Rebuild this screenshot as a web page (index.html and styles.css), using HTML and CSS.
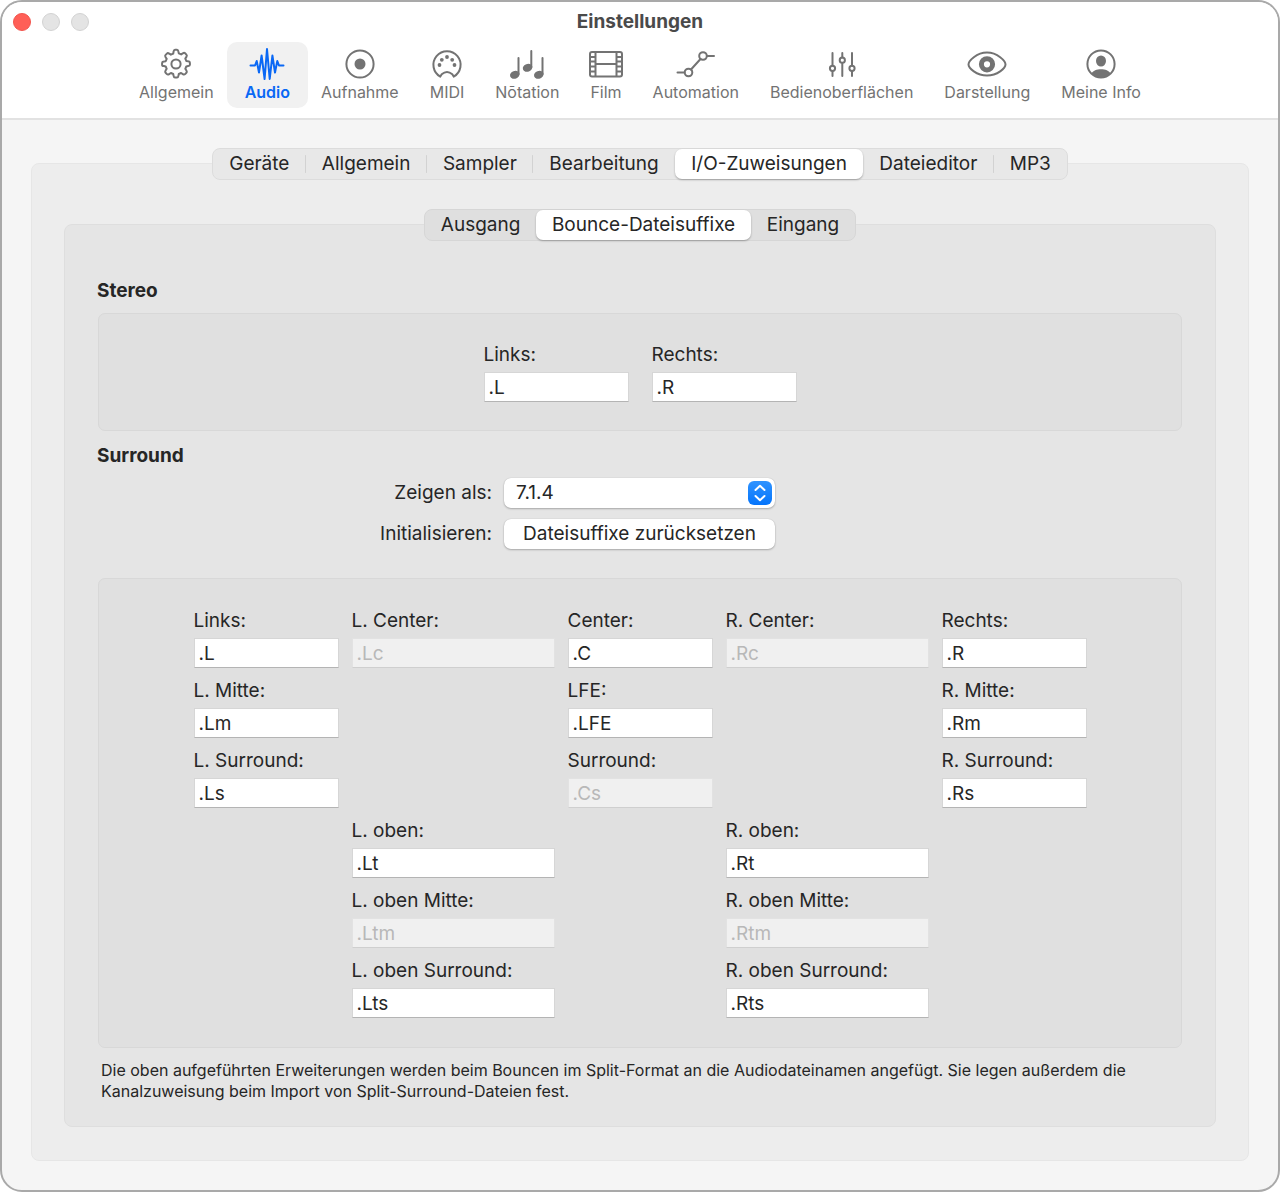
FILE: index.html
```html
<!DOCTYPE html>
<html lang="de">
<head>
<meta charset="utf-8">
<meta name="viewport" content="width=device-width, initial-scale=1">
<title>Einstellungen</title>
<link rel="stylesheet" href="styles.css">
</head>
<body>
<div class="window">
  <header class="titlebar">
    <div class="title-row">
      <div class="lights">
        <button class="light light-close" type="button" aria-label="Schließen"></button>
        <button class="light" type="button" aria-label="Minimieren" disabled></button>
        <button class="light" type="button" aria-label="Vergrößern" disabled></button>
      </div>
      <h1 class="title">Einstellungen</h1>
    </div>
    <nav class="toolbar" aria-label="Bereiche">
      <button class="tool" type="button">
        <svg class="icon" width="40" height="36" viewBox="0 0 40 36" fill="none" stroke="currentColor" stroke-width="2" stroke-linejoin="round"><circle cx="20" cy="18" r="4.6"/><path d="M17.600 5.500Q17.900 3.800 19 3.800h2Q22.100 3.800 22.400 5.500l.4 1.900 2.300 1 1.700-1.100q1.400-.9 2.300 0l1.300 1.300q.9.900 0 2.300l-1.100 1.700 1 2.300 1.900.4q1.700.3 1.700 1.400v2q0 1.100-1.700 1.400l-1.900.4-1 2.300 1.100 1.700q.9 1.400 0 2.300l-1.300 1.300q-.9.900-2.300 0l-1.700-1.100-2.300 1-.4 1.900q-.3 1.700-1.400 1.700h-2q-1.100 0-1.400-1.700l-.4-1.900-2.300-1-1.700 1.100q-1.400.9-2.300 0l-1.300-1.300q-.9-.9 0-2.300l1.100-1.700-1-2.300-1.900-.4Q6.100 20.100 6.100 19v-2q0-1.100 1.700-1.400l1.900-.4 1-2.300-1.100-1.700q-.9-1.400 0-2.300l1.300-1.300q.9-.9 2.300 0l1.700 1.100 2.300-1z"/></svg>
        <span>Allgemein</span>
      </button>
      <button class="tool tool-active" type="button" aria-current="page">
        <svg class="icon" width="40" height="36" viewBox="0 0 40 36" fill="none" stroke="currentColor" stroke-width="2" stroke-linecap="round" stroke-linejoin="round"><path d="M3.500 19.500H8l1.700-4.500 2.300 11.500 2.600-17 3 23.500L20 3l2.700 30L25.400 9.500 28 26.500l2.300-11.500 1.700 4.500h4.500"/></svg>
        <span>Audio</span>
      </button>
      <button class="tool" type="button">
        <svg class="icon" width="40" height="36" viewBox="0 0 40 36" fill="none" stroke="currentColor" stroke-width="2"><circle cx="20" cy="18" r="13.600"/><circle cx="20" cy="18" r="5.500" fill="currentColor" stroke="none"/></svg>
        <span>Aufnahme</span>
      </button>
      <button class="tool" type="button">
        <svg class="icon" width="40" height="36" viewBox="0 0 40 36" fill="none" stroke="currentColor" stroke-width="2" stroke-linejoin="round"><path d="M13.300 30.600A13.600 13.600 0 1 1 26.700 30.600L25.300 28.200Q20 23.700 14.700 28.200Z"/><g fill="currentColor" stroke="none"><circle cx="12.500" cy="19" r="1.900"/><circle cx="14.800" cy="13.800" r="1.900"/><circle cx="20" cy="11" r="1.900"/><circle cx="25.200" cy="13.800" r="1.900"/><circle cx="27.500" cy="19" r="1.900"/></g></svg>
        <span>MIDI</span>
      </button>
      <button class="tool" type="button">
        <svg class="icon" width="40" height="36" viewBox="0 0 40 36" fill="currentColor" stroke="currentColor" stroke-width="2" stroke-linecap="round"><path d="M11.500 12v16M24.300 5v16M35.500 12v16" fill="none"/><ellipse cx="7.800" cy="28.800" rx="3.900" ry="2.900" transform="rotate(-20 7.800 28.800)"/><ellipse cx="20.600" cy="21.800" rx="3.900" ry="2.900" transform="rotate(-20 20.600 21.800)"/><ellipse cx="31.800" cy="28.800" rx="3.900" ry="2.900" transform="rotate(-20 31.800 28.800)"/></svg>
        <span>Nōtation</span>
      </button>
      <button class="tool" type="button">
        <svg class="icon" width="40" height="36" viewBox="0 0 40 36" fill="none" stroke="currentColor" stroke-width="2"><rect x="4" y="6" width="32" height="24.500" rx="2"/><path d="M9.500 6v24.500M30.500 6v24.500M9.500 18h21M4 11h5.500M4 15.500h5.500M4 20.500h5.500M4 25.500h5.500M30.500 11H36M30.500 15.500H36M30.500 20.500H36M30.500 25.500H36"/></svg>
        <span>Film</span>
      </button>
      <button class="tool" type="button">
        <svg class="icon" width="40" height="36" viewBox="0 0 40 36" fill="none" stroke="currentColor" stroke-width="2" stroke-linecap="round"><circle cx="12.500" cy="26.500" r="3.800"/><circle cx="27" cy="10" r="3.800"/><path d="M1.500 26.500h7M31 10h7M15 23.500l9.500-10.500"/></svg>
        <span>Automation</span>
      </button>
      <button class="tool" type="button">
        <svg class="icon" width="40" height="36" viewBox="0 0 40 36" fill="none" stroke="currentColor" stroke-width="2" stroke-linecap="round"><path d="M10.500 7v12.500M10.500 25v5M20.300 7v4.500M20.300 17v13M30 7v12.500M30 25v5"/><circle cx="10.500" cy="22.300" r="2.600"/><circle cx="20.300" cy="14.200" r="2.600"/><circle cx="30" cy="22.300" r="2.600"/></svg>
        <span>Bedienoberflächen</span>
      </button>
      <button class="tool" type="button">
        <svg class="icon" width="40" height="36" viewBox="0 0 40 36" fill="none" stroke="currentColor" stroke-width="2"><path d="M1.500 18.500C1.500 15 9.500 6.500 20 6.500S38.500 15 38.500 18.500 30.500 29.500 20 29.500 1.500 22 1.500 18.500Z"/><circle cx="20" cy="18.300" r="5.600" stroke-width="5"/></svg>
        <span>Darstellung</span>
      </button>
      <button class="tool" type="button">
        <svg class="icon" width="40" height="36" viewBox="0 0 40 36" fill="none" stroke="currentColor" stroke-width="2"><circle cx="20" cy="18" r="13.600"/><ellipse cx="20" cy="15" rx="5" ry="5.500" fill="currentColor" stroke="none"/><path d="M10.500 27.500C13 21.800 27 21.800 29.500 27.500A13.600 13.600 0 0 1 10.500 27.500Z" fill="currentColor" stroke="none"/></svg>
        <span>Meine Info</span>
      </button>
    </nav>
  </header>

  <main class="content">
    <section class="pane pane-outer">
      <div class="tabs tabs-main" role="tablist" aria-label="Audio">
        <button class="tab" type="button" role="tab" aria-selected="false">Geräte</button>
        <button class="tab" type="button" role="tab" aria-selected="false">Allgemein</button>
        <button class="tab" type="button" role="tab" aria-selected="false">Sampler</button>
        <button class="tab" type="button" role="tab" aria-selected="false">Bearbeitung</button>
        <button class="tab" type="button" role="tab" aria-selected="true">I/O-Zuweisungen</button>
        <button class="tab" type="button" role="tab" aria-selected="false">Dateieditor</button>
        <button class="tab" type="button" role="tab" aria-selected="false">MP3</button>
      </div>

      <section class="pane pane-inner">
        <div class="tabs tabs-sub" role="tablist" aria-label="I/O-Zuweisungen">
          <button class="tab" type="button" role="tab" aria-selected="false">Ausgang</button>
          <button class="tab" type="button" role="tab" aria-selected="true">Bounce-Dateisuffixe</button>
          <button class="tab" type="button" role="tab" aria-selected="false">Eingang</button>
        </div>

        <h2 class="heading heading-stereo">Stereo</h2>
        <div class="group group-stereo">
          <div class="field"><label for="st-l">Links:</label><input id="st-l" type="text" value=".L"></div>
          <div class="field"><label for="st-r">Rechts:</label><input id="st-r" type="text" value=".R"></div>
        </div>

        <h2 class="heading">Surround</h2>
        <div class="options">
          <label for="format">Zeigen als:</label>
          <div class="popup">
            <select id="format"><option>7.1.4</option></select>
            <svg class="popup-arrows" width="24" height="24" viewBox="0 0 24 24" fill="none" stroke="currentColor" stroke-width="2" stroke-linecap="round" stroke-linejoin="round"><path d="M7.500 9 12 4.800 16.500 9M7.500 15l4.500 4.200 4.500-4.200"/></svg>
          </div>
          <span id="reset-label">Initialisieren:</span>
          <button id="reset" class="push" type="button" aria-describedby="reset-label">Dateisuffixe zurücksetzen</button>
        </div>

        <div class="group group-surround">
          <div class="field"><label for="su-l">Links:</label><input id="su-l" type="text" value=".L"></div>
          <div class="field"><label for="su-lc">L. Center:</label><input id="su-lc" type="text" value=".Lc" disabled></div>
          <div class="field"><label for="su-c">Center:</label><input id="su-c" type="text" value=".C"></div>
          <div class="field"><label for="su-rc">R. Center:</label><input id="su-rc" type="text" value=".Rc" disabled></div>
          <div class="field"><label for="su-r">Rechts:</label><input id="su-r" type="text" value=".R"></div>

          <div class="field col-1"><label for="su-lm">L. Mitte:</label><input id="su-lm" type="text" value=".Lm"></div>
          <div class="field col-3"><label for="su-lfe">LFE:</label><input id="su-lfe" type="text" value=".LFE"></div>
          <div class="field col-5"><label for="su-rm">R. Mitte:</label><input id="su-rm" type="text" value=".Rm"></div>

          <div class="field col-1"><label for="su-ls">L. Surround:</label><input id="su-ls" type="text" value=".Ls"></div>
          <div class="field col-3"><label for="su-cs">Surround:</label><input id="su-cs" type="text" value=".Cs" disabled></div>
          <div class="field col-5"><label for="su-rs">R. Surround:</label><input id="su-rs" type="text" value=".Rs"></div>

          <div class="field col-2"><label for="su-lt">L. oben:</label><input id="su-lt" type="text" value=".Lt"></div>
          <div class="field col-4"><label for="su-rt">R. oben:</label><input id="su-rt" type="text" value=".Rt"></div>

          <div class="field col-2"><label for="su-ltm">L. oben Mitte:</label><input id="su-ltm" type="text" value=".Ltm" disabled></div>
          <div class="field col-4"><label for="su-rtm">R. oben Mitte:</label><input id="su-rtm" type="text" value=".Rtm" disabled></div>

          <div class="field col-2"><label for="su-lts">L. oben Surround:</label><input id="su-lts" type="text" value=".Lts"></div>
          <div class="field col-4"><label for="su-rts">R. oben Surround:</label><input id="su-rts" type="text" value=".Rts"></div>
        </div>

        <p class="note">Die oben aufgeführten Erweiterungen werden beim Bouncen im Split-Format an die Audiodateinamen angefügt. Sie legen außerdem die Kanalzuweisung beim Import von Split-Surround-Dateien fest.</p>
      </section>
    </section>
  </main>
</div>
</body>
</html>
```
FILE: styles.css
```css
* {
  box-sizing: border-box;
}

body {
  margin: 0;
  padding: 0 2px 2px 0;
  background: #fff;
  color: #262626;
  font-family: Inter, "Liberation Sans", sans-serif;
  font-size: 19px;
  line-height: 22px;
}

button,
input,
select {
  margin: 0;
  color: inherit;
  font: inherit;
}

.window {
  overflow: hidden;
  border: 2px solid #a9a9a9;
  border-radius: 22px;
  background: #f5f5f5;
}

/* Title bar and toolbar */

.titlebar {
  padding-bottom: 10px;
  border-bottom: 2px solid #e2e2e2;
  background: #fff;
}

.title-row {
  display: grid;
  grid-template-columns: 1fr auto 1fr;
  align-items: center;
  height: 40px;
  padding: 0 11px;
}

.lights {
  display: flex;
  gap: 11px;
}

.light {
  width: 18px;
  height: 18px;
  padding: 0;
  border: 1px solid #d2d2d2;
  border-radius: 50%;
  background: #e4e4e4;
}

.light-close {
  border-color: #f2544d;
  background: #ff5f57;
}

.title {
  margin: 0;
  color: #4a4a4a;
  font-size: 19px;
  font-weight: 700;
}

.toolbar {
  display: flex;
  justify-content: center;
  gap: 1px;
}

.tool {
  display: flex;
  flex-direction: column;
  align-items: center;
  height: 66px;
  padding: 4px 15px 0;
  border: 0;
  border-radius: 10px;
  background: none;
  color: #737373;
  font-size: 16px;
  line-height: 20px;
}

.tool .icon {
  margin: 0 -15px;
}

.tool-active {
  margin: 0 -3px;
  padding: 4px 18px 0;
  background: #f1f1f1;
  color: #0a68f5;
  font-weight: 600;
}

/* Nested panes with tab bars straddling their top edge */

.content {
  padding: 43px 29px 29px;
}

.pane {
  display: flex;
  flex-direction: column;
  border-radius: 8px;
}

.pane-outer {
  padding: 0 32px 33px;
  border: 1px solid #e6e6e6;
  background: #ededed;
}

.pane-inner {
  margin-top: 44px;
  padding: 0 33px 24px;
  border: 1px solid #dedede;
  background: #e5e5e5;
}

.tabs {
  display: flex;
  align-self: center;
  height: 32px;
  margin-top: -16px;
  border: 1px solid #dcdcdc;
  border-radius: 8px;
  background: #e8e8e8;
}

.tabs-main {
  min-width: 856px;
}

.tabs-sub {
  min-width: 432px;
  border-color: #d6d6d6;
  background: #dfdfdf;
}

.tab {
  display: flex;
  flex: 1 0 auto;
  align-items: center;
  justify-content: center;
  padding: 0 14px;
  border: 0;
  border-radius: 7px;
  background: none;
}

.tab[aria-selected="true"] {
  background: #fff;
  box-shadow: 0 1px 2px rgba(0, 0, 0, 0.3);
}

.tabs-main .tab[aria-selected="false"]:not(:last-child) {
  background: linear-gradient(#d2d2d2, #d2d2d2) right center / 1px 18px no-repeat;
}

.tabs-main .tab[aria-selected="false"]:nth-child(4) {
  background: none;
}

/* Groups of fields */

.heading {
  margin: 0 0 0 -1px;
  font-size: 19px;
  font-weight: 700;
}

.heading-stereo {
  margin-top: 39px;
}

.group {
  border: 1px solid #d8d8d8;
  border-radius: 7px;
  background: #e0e0e0;
}

.group-stereo {
  display: flex;
  justify-content: center;
  gap: 23px;
  margin: 11px 0 14px;
  padding: 30px 0 28px;
}

.group-stereo .field {
  width: 145px;
}

.group-surround {
  display: grid;
  grid-template-columns: 145px 203px 145px 203px 145px;
  justify-content: center;
  gap: 12px 13px;
  margin-top: 29px;
  padding: 31px 0 29px;
}

.col-1 { grid-column: 1; }
.col-2 { grid-column: 2; }
.col-3 { grid-column: 3; }
.col-4 { grid-column: 4; }
.col-5 { grid-column: 5; }

.field {
  display: flex;
  flex-direction: column;
  gap: 6px;
}

.field input {
  width: 100%;
  height: 30px;
  padding: 0 4px;
  border: 1px solid #d6d6d6;
  border-bottom-color: #b4b4b4;
  border-radius: 0;
  background: #fff;
}

.field input:disabled {
  border-color: #e2e2e2;
  border-bottom-color: #cfcfcf;
  background: #f0f0f0;
  color: #b8b8b8;
}

.options {
  display: grid;
  grid-template-columns: minmax(0, 394px) 271px;
  align-items: center;
  gap: 11px 12px;
  margin-top: 11px;
}

.options > label,
.options > span {
  text-align: right;
}

.popup {
  position: relative;
  display: flex;
}

.popup select,
.push {
  width: 100%;
  height: 30px;
  border: 0;
  border-radius: 7px;
  background: #fff;
  box-shadow: 0 0 1px rgba(0, 0, 0, 0.2), 0 1px 2px rgba(0, 0, 0, 0.25);
}

.popup select {
  padding: 0 32px 0 12px;
  appearance: none;
}

.popup-arrows {
  position: absolute;
  top: 3px;
  right: 3px;
  border-radius: 6px;
  background: linear-gradient(#2f93ff, #0474fb);
  color: #fff;
  pointer-events: none;
}

.note {
  margin: 12px 0 0 3px;
  font-size: 16px;
  line-height: 21px;
}
```
